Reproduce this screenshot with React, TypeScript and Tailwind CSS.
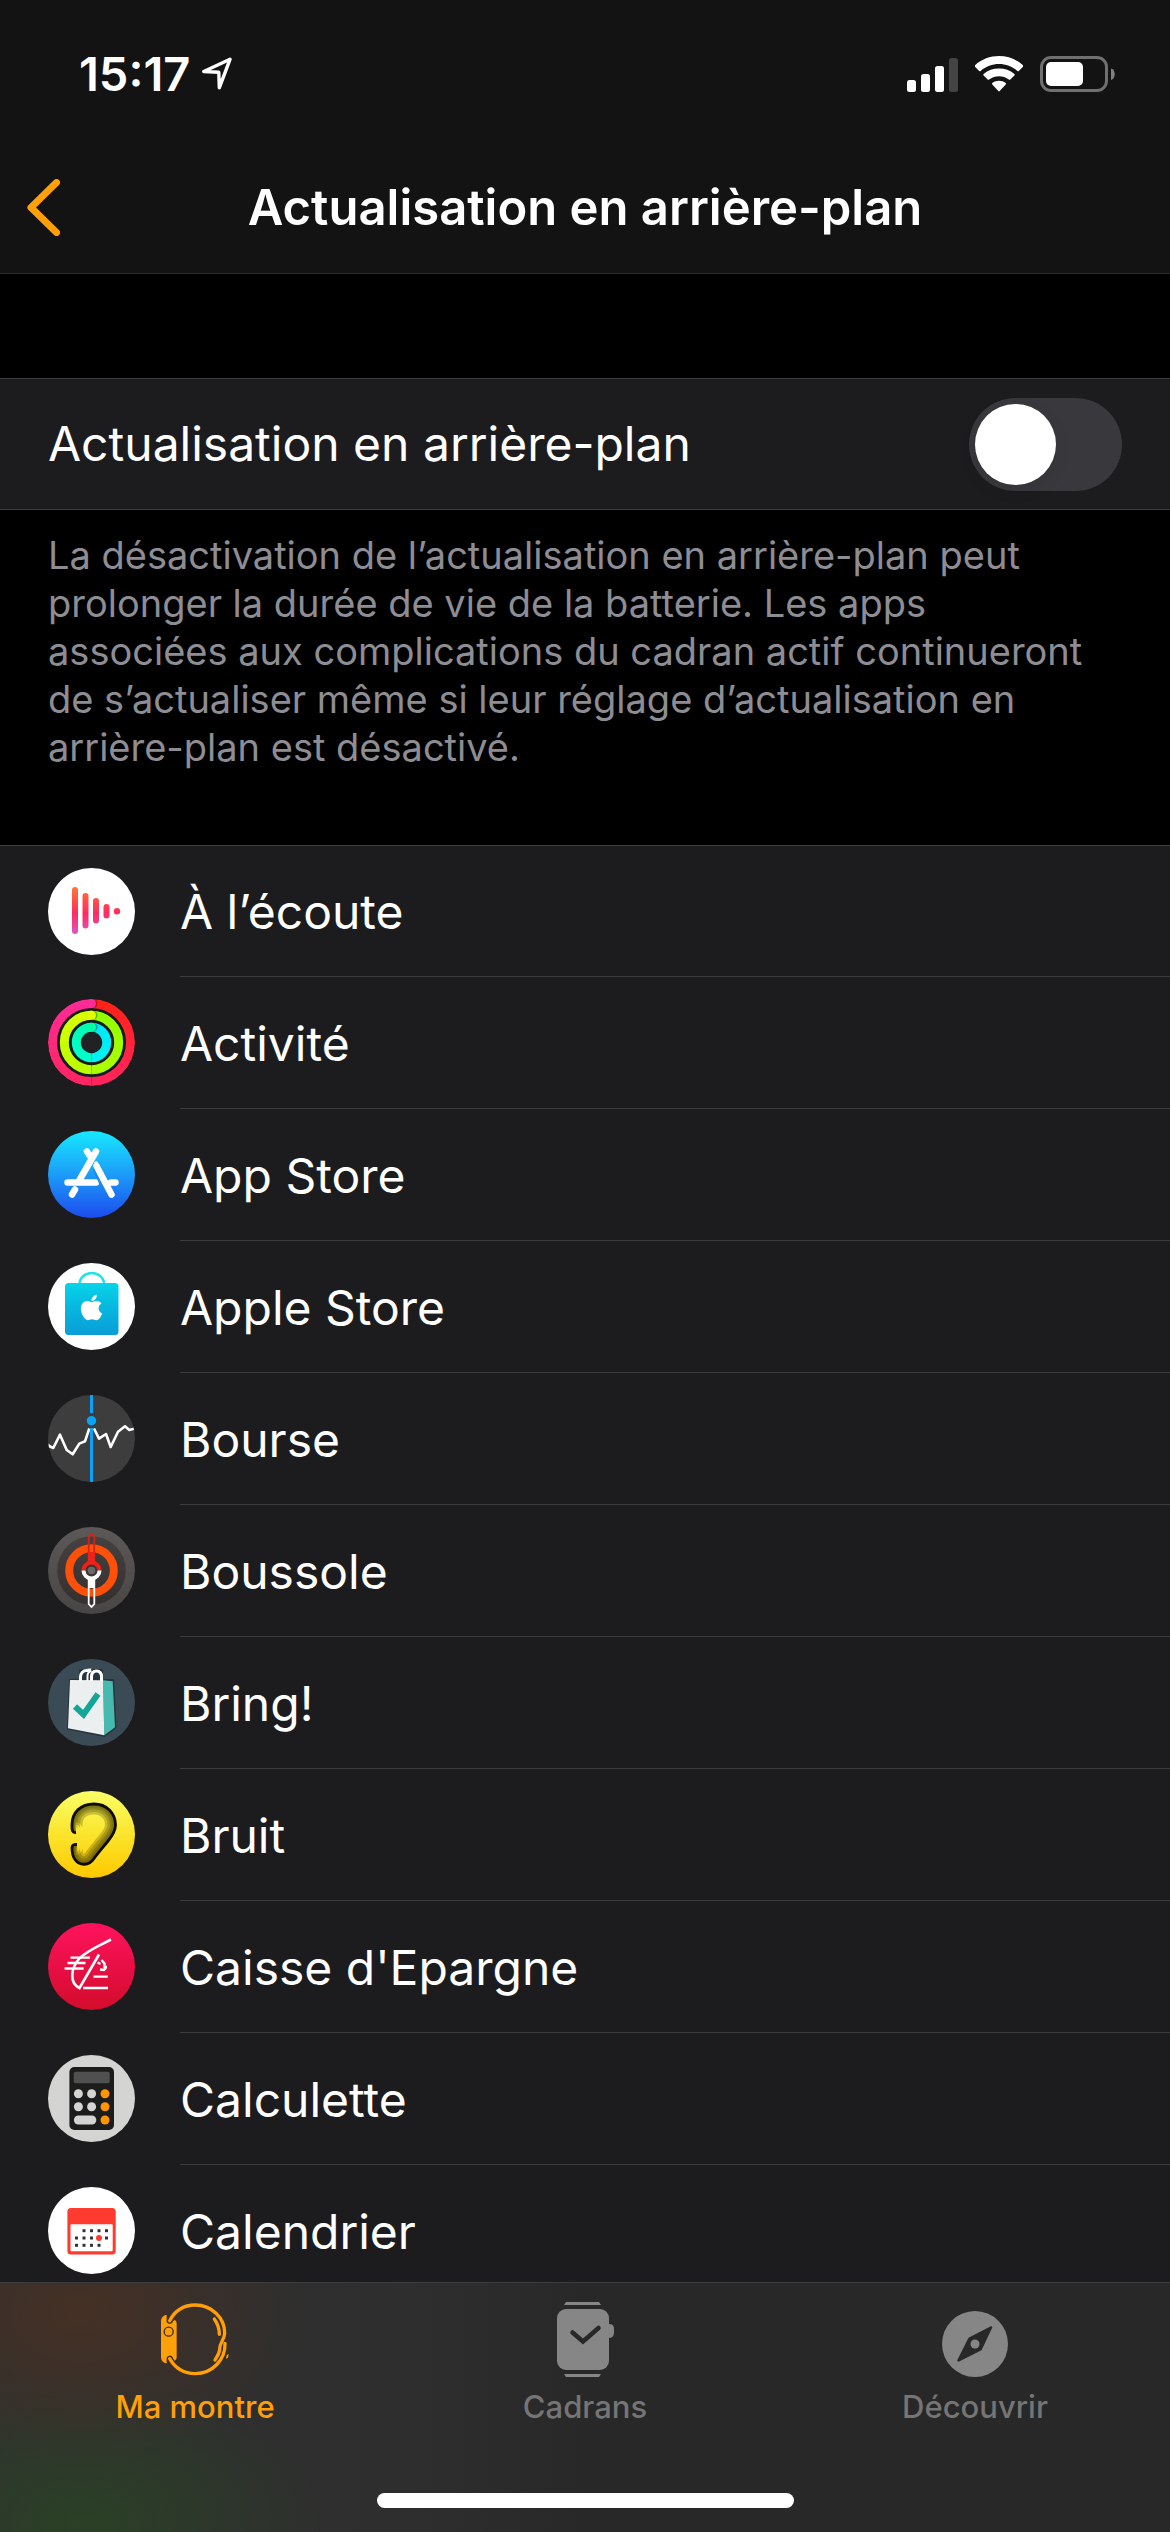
import { useState, type ReactNode } from "react";
import { FaApple } from "react-icons/fa";

function AppIcon({ id, children }: { id: string; children: ReactNode }) {
  return (
    <svg viewBox="0 0 87 87" className="mt-[22px] size-[87px] shrink-0 self-start" aria-hidden="true">
      <clipPath id={`${id}-clip`}>
        <circle cx="43.5" cy="43.5" r="43.5" />
      </clipPath>
      <g clipPath={`url(#${id}-clip)`}>{children}</g>
    </svg>
  );
}

function VerticalGradient({ id, stops }: { id: string; stops: string[] }) {
  return (
    <linearGradient id={id} gradientUnits="userSpaceOnUse" x1="0" y1="0" x2="0" y2="87">
      {stops.map((color, i) => (
        <stop key={color} offset={i / (stops.length - 1)} stopColor={color} />
      ))}
    </linearGradient>
  );
}

function NowPlayingIcon() {
  return (
    <AppIcon id="now">
      <linearGradient id="now-g" gradientUnits="userSpaceOnUse" x1="0" y1="18" x2="0" y2="68">
        <stop offset="0" stopColor="#ff7a35" />
        <stop offset=".55" stopColor="#ff2a5f" />
        <stop offset="1" stopColor="#d65bd0" />
      </linearGradient>
      <rect width="87" height="87" fill="#fff" />
      <g fill="url(#now-g)">
        <rect x="24" y="19" width="6" height="47" rx="3" />
        <rect x="34.500" y="25" width="6" height="35.500" rx="3" />
        <rect x="45" y="30" width="6" height="25.500" rx="3" />
        <rect x="55.500" y="36" width="6" height="14.500" rx="3" />
        <circle cx="69" cy="43.300" r="3.200" />
      </g>
    </AppIcon>
  );
}

function ActivityIcon() {
  const rings = [
    { r: 39, right: ["#ff2215", "#ff2560"], left: ["#ff2b98", "#ff2560"] },
    { r: 27.2, right: ["#8cff00", "#b2ff00"], left: ["#e0ff00", "#b2ff00"] },
    { r: 15.2, right: ["#00dcff", "#00ffee"], left: ["#00ffa2", "#00ffe0"] },
  ];
  return (
    <AppIcon id="act">
      <rect width="87" height="87" fill="#171a1a" />
      <circle cx="43.5" cy="43.5" r="10" fill="#202226" />
      {rings.map(({ r, right, left }, i) => (
        <g key={r} fill="none" strokeWidth="9">
          <VerticalGradient id={`act-r${i}`} stops={right} />
          <VerticalGradient id={`act-l${i}`} stops={left} />
          <path d={`M43.5 ${43.5 - r}a${r} ${r} 0 0 1 0 ${2 * r}`} stroke={`url(#act-r${i})`} />
          <path d={`M43.500 ${43.5 + r}a${r} ${r} 0 0 1 0 ${-2 * r}`} stroke={`url(#act-l${i})`} />
          <circle cx="45" cy={43.5 - r} r="4.500" fill="#000" opacity=".3" />
          <circle cx="43.500" cy={43.5 - r} r="4.500" fill={left[0]} />
        </g>
      ))}
    </AppIcon>
  );
}

function AppStoreIcon() {
  return (
    <AppIcon id="store">
      <VerticalGradient id="store-g" stops={["#17e9ff", "#1c9cf8", "#1d4bee"]} />
      <rect width="87" height="87" fill="url(#store-g)" />
      <g fill="none" stroke="#fff" strokeLinecap="round" strokeWidth="6.500">
        <path d="M39 20.500l4 6M48 20.500L31.500 49" />
        <path d="M19.500 51.500H48M63 51.500h4.500M27 58.500l-3 5M48.500 35l15 28.500" />
      </g>
      <path d="M46 31l3-1 4 9-2 3z" fill="#fff" />
      <path d="M45.500 38l7 16" stroke="#1e86f5" strokeWidth="1.500" />
    </AppIcon>
  );
}

function AppleStoreIcon() {
  return (
    <AppIcon id="apple">
      <VerticalGradient id="apple-g" stops={["#08ecf2", "#07b8e0", "#0a8fd0"]} />
      <rect width="87" height="87" fill="#fff" />
      <path d="M31.500 22v-1a12.300 11 0 0 1 24.600 0v1" fill="none" stroke="#1fe2ea" strokeWidth="2.500" />
      <rect x="17" y="20" width="53.500" height="52" rx="3.500" fill="url(#apple-g)" />
      <FaApple x="29" y="30" size={29} fill="#fff" />
    </AppIcon>
  );
}

function StocksIcon() {
  return (
    <AppIcon id="stocks">
      <rect width="87" height="87" fill="#3d3d3d" />
      <path
        d="M-1 49L2 51.500 5.300 53 12 39.700 18.700 55 24.700 59.300 31.300 48.600 37 46.300 41.300 33.500M46 33.500L51 43.600 58 39 62.700 52 70 36.700 77 31.300 81.300 35 87 33.500"
        fill="none"
        stroke="#fff"
        strokeWidth="2.600"
        strokeLinejoin="round"
      />
      <path d="M43.500 0v18M43.500 33v54" stroke="#08a4fb" strokeWidth="3" />
      <circle cx="43.500" cy="25.700" r="4.700" fill="#08a4fb" />
    </AppIcon>
  );
}

function CompassAppIcon() {
  return (
    <AppIcon id="compass">
      <VerticalGradient id="compass-a" stops={["#5c5857", "#484644"]} />
      <VerticalGradient id="compass-b" stops={["#474342", "#322e2e"]} />
      <rect width="87" height="87" fill="url(#compass-a)" />
      <circle cx="43.500" cy="43.500" r="34.300" fill="url(#compass-b)" />
      <circle cx="43.500" cy="43.500" r="22.300" fill="none" stroke="#ff500a" strokeWidth="8" />
      <path d="M40.700 36V10l2.800-3 2.800 3v26" fill="none" stroke="#d81f18" strokeWidth="1.800" />
      <path d="M40 25h7v10h-7z" fill="#ec2118" />
      <path d="M40.700 51v26l2.800 3 2.800-3V51" fill="none" stroke="#fff" strokeWidth="1.800" />
      <path d="M40 51h7v10h-7z" fill="#fff" />
      <circle cx="43.500" cy="43.500" r="8" fill="#3a3636" />
      <path d="M35.500 43.500a8 8 0 0 1 16 0" fill="none" stroke="#ec2118" strokeWidth="4" />
      <path d="M35.500 43.500a8 8 0 0 0 16 0" fill="none" stroke="#fff" strokeWidth="4" />
      <circle cx="43.500" cy="43.500" r="3.800" fill="#6a6868" />
    </AppIcon>
  );
}

function BringIcon() {
  return (
    <AppIcon id="bring">
      <rect width="87" height="87" fill="#3b4b55" />
      <path d="M21 20h45l2.500 49-12 9-37.500-7.500z" fill="#26343d" />
      <path d="M31 10h24v12H31z" fill="#26343d" />
      <path d="M55 21.300l9.700 1 2.300 46-10.700 8z" fill="#47b9ae" />
      <path d="M22 21l33 .3 1.300 55L20 69.300z" fill="#ecefef" />
      <g fill="none" stroke="#fff" strokeWidth="3">
        <path d="M32.500 22v-4c0-4 3-6.500 6-6.500 1.500 0 3-1 4.500-.5" />
        <path d="M43.500 22v-4c0-4 2-6 5-6s5 2 5 6v4" />
        <path d="M39.500 22v-5c0-3 1.500-4.500 4-5" strokeWidth="2" />
      </g>
      <path d="M27 47.500l8.500 8L50 35" fill="none" stroke="#13a597" strokeWidth="6" />
    </AppIcon>
  );
}

const EAR =
  "M28 41.500C23.500 42 24 38 24 34C24 21 33 13 46 13C58.500 13 67.500 22 67.500 34C67.500 40 65 44 60 50C54 57.500 50 62 46 67.500C41 75 31.500 75 27 68.500C24 64.500 24 60 24 56.500C24 54 26 53.300 29 53.500";

function NoiseIcon() {
  return (
    <AppIcon id="noise">
      <VerticalGradient id="noise-g" stops={["#faff66", "#fbe42c", "#ffc900"]} />
      <clipPath id="noise-ear">
        <path d={`${EAR}L36 48z`} />
      </clipPath>
      <rect width="87" height="87" fill="url(#noise-g)" />
      <g fill="none" stroke="#4a4200" strokeOpacity=".27" clipPath="url(#noise-ear)">
        <path d={EAR} strokeWidth="21" />
        <path d={EAR} strokeWidth="16" />
        <path d={EAR} strokeWidth="11" />
        <path d={EAR} strokeWidth="7" />
      </g>
      <path d={EAR} fill="none" stroke="#0c0b00" strokeWidth="2.800" />
    </AppIcon>
  );
}

function BankIcon() {
  return (
    <AppIcon id="bank">
      <VerticalGradient id="bank-g" stops={["#ff135d", "#e80f45", "#d30c2c"]} />
      <rect width="87" height="87" fill="url(#bank-g)" />
      <g fill="none" stroke="#fff" strokeWidth="2.300">
        <path d="M63 16.500C50 23.500 38 28 31 36C23 45 21 60 31.500 65L51 31.500" strokeWidth="2.600" />
        <path d="M22.500 34.700H42M19.500 40h18M16.600 45.500h19M45.500 53.700h14.300M35 65h25" />
        <path d="M49.500 39.500l3 1.500M53.500 37l3 3.500v3.500h2.500M52 46.500l4 .5 2-2" />
      </g>
    </AppIcon>
  );
}

function CalculatorIcon() {
  return (
    <AppIcon id="calc">
      <rect width="87" height="87" fill="#d4d4d2" />
      <rect x="21.400" y="12" width="44.600" height="63" rx="5" fill="#1c1c1c" />
      <rect x="25.700" y="16.700" width="36" height="11.600" rx="2" fill="#505050" />
      {[38.7, 51.7].map((y) => (
        <g key={y} fill="#d4d4d2">
          <circle cx="30.400" cy={y} r="4.500" />
          <circle cx="43.600" cy={y} r="4.500" />
        </g>
      ))}
      <rect x="25.900" y="60.500" width="22.400" height="9" rx="4.500" fill="#d4d4d2" />
      {[38.7, 51.7, 65].map((y) => (
        <circle key={y} cx="57" cy={y} r="4.500" fill="#ff9500" />
      ))}
    </AppIcon>
  );
}

function CalendarIcon() {
  const rows = [
    { y: 43.7, xs: [36, 43.5, 51, 58.5] },
    { y: 51, xs: [28.5, 36, 43.5, 58.5] },
    { y: 58.3, xs: [28.5, 36, 43.5, 51] },
  ];
  return (
    <AppIcon id="cal">
      <rect width="87" height="87" fill="#fff" />
      <rect x="19.400" y="21" width="48.300" height="46.400" rx="3.500" fill="#ff3b30" />
      <rect x="22.500" y="37.300" width="42.200" height="27" rx="1" fill="#fff" />
      {rows.map(({ y, xs }) =>
        xs.map((x) => <rect key={`${x}-${y}`} x={x - 1.5} y={y - 1.5} width="3" height="3" fill="#333" />),
      )}
      <circle cx="51" cy="51" r="3" fill="#ff3b30" />
    </AppIcon>
  );
}

const APPS = [
  { name: "À l’écoute", icon: <NowPlayingIcon /> },
  { name: "Activité", icon: <ActivityIcon /> },
  { name: "App Store", icon: <AppStoreIcon /> },
  { name: "Apple Store", icon: <AppleStoreIcon /> },
  { name: "Bourse", icon: <StocksIcon /> },
  { name: "Boussole", icon: <CompassAppIcon /> },
  { name: "Bring!", icon: <BringIcon /> },
  { name: "Bruit", icon: <NoiseIcon /> },
  { name: "Caisse d'Epargne", icon: <BankIcon /> },
  { name: "Calculette", icon: <CalculatorIcon /> },
  { name: "Calendrier", icon: <CalendarIcon /> },
];

function StatusBar() {
  return (
    <div className="flex h-[134px] items-center justify-between pt-[14px] pr-[55px] pl-[79px]">
      <div className="flex items-center gap-[12px]">
        <span className="text-[47px] leading-[56px] font-semibold">15:17</span>
        <svg viewBox="0 0 30 34" className="h-[34px] w-[30px]" aria-hidden="true">
          <path
            d="M28 2.300L1.800 14.500l15 .8.500 15.500z"
            fill="none"
            stroke="#fff"
            strokeWidth="3.400"
            strokeLinejoin="round"
          />
        </svg>
      </div>
      <div className="flex items-center gap-[17px]">
        <svg viewBox="0 0 51 36" className="h-[36px] w-[51px]" aria-hidden="true">
          <g fill="#fff">
            <rect x="0" y="24" width="9" height="12" rx="2.500" />
            <rect x="14" y="18" width="9" height="18" rx="2.500" />
            <rect x="28" y="10" width="9" height="26" rx="2.500" />
          </g>
          <rect x="42" y="2" width="9" height="34" rx="2.500" fill="#444" />
        </svg>
        <svg viewBox="0 0 48 36" className="h-[36px] w-[48px]" aria-hidden="true" fill="#fff">
          <path d="M0 10.800a1 1 0 0 1 0-1.500C13-3.100 35-3.100 48 9.300a1 1 0 0 1 0 1.500L43.800 15a1 1 0 0 1-1.400 0C32 5.800 16 5.800 5.600 15a1 1 0 0 1-1.400 0z" />
          <path d="M8.600 19.500a1 1 0 0 1 0-1.500c8.400-7.200 22.400-7.200 30.800 0a1 1 0 0 1 0 1.500l-4.100 4.100a1 1 0 0 1-1.400 0c-5.600-4.600-14.200-4.600-19.800 0a1 1 0 0 1-1.400 0z" />
          <path d="M17.300 28.400a1 1 0 0 1 0-1.500c3.800-2.900 9.600-2.900 13.400 0a1 1 0 0 1 0 1.500l-6 6.700a1 1 0 0 1-1.400 0z" />
        </svg>
        <svg viewBox="0 0 75 36" className="h-[36px] w-[75px]" aria-hidden="true">
          <rect x="1.500" y="1.500" width="65" height="33" rx="9.500" fill="none" stroke="#707070" strokeWidth="3" />
          <rect x="6" y="6" width="37" height="24" rx="5" fill="#fff" />
          <path d="M71 12.500c5 1.500 5 10 0 11.500z" fill="#808080" />
        </svg>
      </div>
    </div>
  );
}

function WatchIcon() {
  return (
    <svg viewBox="30 38 210 225" className="h-[75px] w-[70px]" aria-hidden="true" fill="none">
      <path
        d="M33 96c0-11 8-19 17-19v14a9 9 0 0 0 19 5l5-4c4 2 6 6 6 10v101c0 6-2 9-6 11l-5-7a9 9 0 0 0-19 3v12c-9 0-17-8-17-19z"
        fill="#ff9f0a"
      />
      <circle cx="56" cy="127" r="13.500" stroke="#38302a" strokeWidth="4" />
      <g stroke="#ff9f0a" strokeWidth="10" strokeLinecap="round" strokeLinejoin="round">
        <path d="M59 94C75 64 103 47 136 47c48 0 88 38 88 84 0 20-15 28-15 48 0 14-8 22-14 33" />
        <path d="M193 89c10 14 15 30 15 46M225 162c2 48-38 91-89 91-33 0-61-17-77-45" />
      </g>
      <path d="M230 198l6-4-2 11-6 3z" fill="#ff9f0a" />
    </svg>
  );
}

function FaceIcon() {
  return (
    <svg viewBox="0 0 58 75" className="h-[75px] w-[58px]" aria-hidden="true" fill="#868686">
      <path d="M8 3l2-3h33l2 3zM8 72l2 3h33l2-3z" />
      <rect x="1" y="7" width="52" height="61" rx="9" />
      <path d="M53 22c5 0 5 3 5 6.500S58 36 53 36z" />
      <path
        d="M16.500 30.500L27 39.500 42.500 26"
        fill="none"
        stroke="#282828"
        strokeWidth="4.500"
        strokeLinecap="round"
      />
    </svg>
  );
}

function DiscoverIcon() {
  return (
    <svg viewBox="0 0 66 66" className="size-[66px]" aria-hidden="true">
      <circle cx="33" cy="33" r="33" fill="#868686" />
      <path
        d="M49 16.500L27.500 27.500 16.500 49.500 38.500 38.500z"
        fill="#282828"
        stroke="#282828"
        strokeWidth="2.500"
        strokeLinejoin="round"
      />
      <circle cx="33" cy="33" r="4.500" fill="#868686" />
    </svg>
  );
}

const TABS = [
  { label: "Ma montre", icon: <WatchIcon />, active: true },
  { label: "Cadrans", icon: <FaceIcon />, active: false },
  { label: "Découvrir", icon: <DiscoverIcon />, active: false },
];

export default function App() {
  const [refresh, setRefresh] = useState(false);

  return (
    <div className="flex h-screen flex-col bg-black font-['Inter',sans-serif] text-white">
      <header className="shrink-0 border-b border-[#2b2b2b] bg-[#131313]">
        <StatusBar />
        <div className="grid h-[139px] grid-cols-[120px_1fr_120px] items-center pt-[8px]">
          <button type="button" aria-label="Retour" className="flex h-full items-center pl-[27px]">
            <svg viewBox="0 0 33 57" className="h-[57px] w-[33px]" aria-hidden="true">
              <path
                d="M29.500 3.500L4 28.500l25.500 25"
                fill="none"
                stroke="#ff9f0a"
                strokeWidth="7"
                strokeLinecap="round"
                strokeLinejoin="round"
              />
            </svg>
          </button>
          <h1 className="text-center text-[49px] leading-[60px] font-semibold whitespace-nowrap">
            Actualisation en arrière-plan
          </h1>
        </div>
      </header>

      <main className="min-h-0 flex-1 overflow-y-auto pt-[104px] [scrollbar-width:none]">
        <label className="flex h-[132px] items-center justify-between border-y border-[#3d3d41] bg-[#1c1c1e] px-[48px]">
          <span className="text-[48px] leading-[60px]">Actualisation en arrière-plan</span>
          <input
            type="checkbox"
            role="switch"
            checked={refresh}
            onChange={(e) => setRefresh(e.target.checked)}
            className="h-[93px] w-[153px] shrink-0 appearance-none rounded-full bg-[#39393d] p-[6px] before:block before:size-[81px] before:rounded-full before:bg-white before:shadow-[0_6px_16px_rgba(0,0,0,0.1)] checked:bg-[#30d158] checked:before:ml-[60px]"
          />
        </label>
        <p className="pt-[21px] pr-[72px] pb-[74px] pl-[48px] text-[38px] leading-[48px] text-[#8d8d93]">
          La désactivation de l’actualisation en arrière-plan peut prolonger la durée de vie de la batterie. Les apps
          associées aux complications du cadran actif continueront de s’actualiser même si leur réglage
          d’actualisation en arrière-plan est désactivé.
        </p>

        <ul className="border-t border-[#3d3d41] bg-[#1c1c1e]">
          {APPS.map(({ name, icon }) => (
            <li key={name} className="group flex h-[132px] items-center gap-[45px] pl-[48px] first:h-[131px]">
              {icon}
              <a
                href="#"
                className="flex h-full flex-1 items-center border-b border-[#3d3d41] pt-[2px] text-[48px] leading-[60px] group-last:border-b-0"
              >
                {name}
              </a>
            </li>
          ))}
        </ul>
      </main>

      <footer className="shrink-0 border-t border-[#3d3d3f] bg-[#292929] bg-[radial-gradient(ellipse_220px_150px_at_80px_30px,#453024_0%,transparent_100%),radial-gradient(ellipse_240px_150px_at_80px_240px,#2a4026_0%,transparent_100%),linear-gradient(90deg,#303030_0%,#2e2e2e_35%,#282828_50%)] pt-[18px] pb-[24px]">
        <nav className="grid grid-cols-3">
          {TABS.map(({ label, icon, active }) => (
            <button
              key={label}
              type="button"
              aria-current={active ? "page" : undefined}
              className={`flex flex-col items-center gap-[12px] ${active ? "text-[#ff9f0a]" : "text-[#757575]"}`}
            >
              <span className="flex h-[76px] items-end">{icon}</span>
              <span className="text-[31px] leading-[36px] font-medium">{label}</span>
            </button>
          ))}
        </nav>
        <div className="mx-auto mt-[68px] h-[15px] w-[417px] max-w-full rounded-full bg-white" />
      </footer>
    </div>
  );
}
